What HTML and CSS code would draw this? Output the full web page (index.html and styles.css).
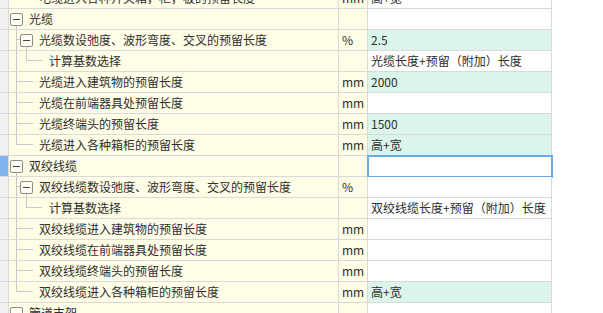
FILE: index.html
```html
<!DOCTYPE html>
<html lang="zh">
<head>
<meta charset="utf-8">
<link rel="stylesheet" href="styles.css">
</head>
<body>
<div class="grid">
  <div class="row">
    <div class="gut"></div>
    <div class="name"><span class="g-l"></span><span class="h13"></span><span class="txt">电缆进入各种开关箱，柜，板的预留长度</span></div>
    <div class="unit">mm</div>
    <div class="val">高+宽</div>
  </div>
  <div class="row">
    <div class="gut"></div>
    <div class="name"><span class="node"><span class="box"><span class="minus"></span></span></span><span class="txt">光缆</span></div>
    <div class="unit"></div>
    <div class="val"></div>
  </div>
  <div class="row">
    <div class="gut"></div>
    <div class="name"><span class="g-t"></span><span class="node"><span class="box"><span class="minus"></span></span></span><span class="txt">光缆数设弛度、波形弯度、交叉的预留长度</span></div>
    <div class="unit">%</div>
    <div class="val green">2.5</div>
  </div>
  <div class="row">
    <div class="gut"></div>
    <div class="name"><span class="g-v"></span><span class="g-l13"></span><span class="h9"></span><span class="txt txt3">计算基数选择</span></div>
    <div class="unit"></div>
    <div class="val">光缆长度+预留（附加）长度</div>
  </div>
  <div class="row">
    <div class="gut"></div>
    <div class="name"><span class="g-t"></span><span class="h13"></span><span class="txt">光缆进入建筑物的预留长度</span></div>
    <div class="unit">mm</div>
    <div class="val green">2000</div>
  </div>
  <div class="row">
    <div class="gut"></div>
    <div class="name"><span class="g-t"></span><span class="h13"></span><span class="txt">光缆在前端器具处预留长度</span></div>
    <div class="unit">mm</div>
    <div class="val"></div>
  </div>
  <div class="row">
    <div class="gut"></div>
    <div class="name"><span class="g-t"></span><span class="h13"></span><span class="txt">光缆终端头的预留长度</span></div>
    <div class="unit">mm</div>
    <div class="val green">1500</div>
  </div>
  <div class="row">
    <div class="gut"></div>
    <div class="name"><span class="g-l"></span><span class="h13"></span><span class="txt">光缆进入各种箱柜的预留长度</span></div>
    <div class="unit">mm</div>
    <div class="val green">高+宽</div>
  </div>
  <div class="row">
    <div class="gut selected"></div>
    <div class="name"><span class="node"><span class="box"><span class="minus"></span></span></span><span class="txt">双绞线缆</span></div>
    <div class="unit"></div>
    <div class="val focus"></div>
  </div>
  <div class="row">
    <div class="gut"></div>
    <div class="name"><span class="g-t"></span><span class="node"><span class="box"><span class="minus"></span></span></span><span class="txt">双绞线缆数设弛度、波形弯度、交叉的预留长度</span></div>
    <div class="unit">%</div>
    <div class="val"></div>
  </div>
  <div class="row">
    <div class="gut"></div>
    <div class="name"><span class="g-v"></span><span class="g-l13"></span><span class="h9"></span><span class="txt txt3">计算基数选择</span></div>
    <div class="unit"></div>
    <div class="val">双绞线缆长度+预留（附加）长度</div>
  </div>
  <div class="row">
    <div class="gut"></div>
    <div class="name"><span class="g-t"></span><span class="h13"></span><span class="txt">双绞线缆进入建筑物的预留长度</span></div>
    <div class="unit">mm</div>
    <div class="val"></div>
  </div>
  <div class="row">
    <div class="gut"></div>
    <div class="name"><span class="g-t"></span><span class="h13"></span><span class="txt">双绞线缆在前端器具处预留长度</span></div>
    <div class="unit">mm</div>
    <div class="val"></div>
  </div>
  <div class="row">
    <div class="gut"></div>
    <div class="name"><span class="g-t"></span><span class="h13"></span><span class="txt">双绞线缆终端头的预留长度</span></div>
    <div class="unit">mm</div>
    <div class="val"></div>
  </div>
  <div class="row">
    <div class="gut"></div>
    <div class="name"><span class="g-l"></span><span class="h13"></span><span class="txt">双绞线缆进入各种箱柜的预留长度</span></div>
    <div class="unit">mm</div>
    <div class="val green">高+宽</div>
  </div>
  <div class="row">
    <div class="gut"></div>
    <div class="name"><span class="node"><span class="box"><span class="minus"></span></span></span><span class="txt">管道支架</span></div>
    <div class="unit"></div>
    <div class="val"></div>
  </div>
</div>
</body>
</html>
```

FILE: styles.css
```css
html, body {
  margin: 0;
  padding: 0;
  background: #ffffff;
  overflow: hidden;
}
body {
  width: 603px;
  height: 313px;
  font-family: "Noto Sans CJK SC", "Noto Sans", sans-serif;
  font-size: 12px;
  color: #2e2e2e;
}
.grid {
  margin-top: -12px;
  display: flex;
  flex-direction: column;
  width: 552px;
}
.row {
  display: flex;
  height: 21px;
}
.row > div {
  box-sizing: border-box;
  height: 21px;
  border-bottom: 1px solid #d9d9d9;
  border-right: 1px solid #d9d9d9;
  line-height: 20px;
  white-space: nowrap;
  overflow: hidden;
}
.gut {
  width: 9px;
  background: #f0f0f0;
}
.gut.selected {
  background: #80b3ee;
}
.name {
  width: 330px;
  background: #fffde6;
  display: flex;
  align-items: stretch;
  padding-left: 1px;
}
.unit {
  width: 29px;
  background: #fffde6;
  padding-left: 3px;
}
.val {
  width: 184px;
  background: #ffffff;
  padding-left: 3px;
}
.val.green {
  background: #dcf5ea;
}
.val.focus {
  outline: 2px solid #6ea7e6;
  outline-offset: -1px;
}
.txt {
  margin-left: 6px;
}
.txt3 {
  margin-left: 7px;
}
/* tree guides */
.g-t, .g-l, .g-v {
  width: 10px;
  flex-shrink: 0;
}
.g-t {
  background:
    linear-gradient(#c9c9c9, #c9c9c9) 6px 0 / 1px 100% no-repeat,
    linear-gradient(#c9c9c9, #c9c9c9) 6px 9px / 4px 1px no-repeat;
}
.g-l {
  background:
    linear-gradient(#c9c9c9, #c9c9c9) 6px 0 / 1px 10px no-repeat,
    linear-gradient(#c9c9c9, #c9c9c9) 6px 9px / 4px 1px no-repeat;
}
.g-v {
  background: linear-gradient(#c9c9c9, #c9c9c9) 6px 0 / 1px 100% no-repeat;
}
.g-l13 {
  width: 13px;
  flex-shrink: 0;
  background:
    linear-gradient(#c9c9c9, #c9c9c9) 6px 0 / 1px 10px no-repeat,
    linear-gradient(#c9c9c9, #c9c9c9) 6px 9px / 7px 1px no-repeat;
}
.h13 {
  width: 13px;
  flex-shrink: 0;
  background: linear-gradient(#c9c9c9, #c9c9c9) 0 9px / 100% 1px no-repeat;
}
.h9 {
  width: 9px;
  flex-shrink: 0;
  background: linear-gradient(#c9c9c9, #c9c9c9) 0 9px / 100% 1px no-repeat;
}
.node {
  width: 13px;
  flex-shrink: 0;
  padding-top: 4px;
  box-sizing: border-box;
  background: linear-gradient(#c9c9c9, #c9c9c9) 6px 17px / 1px 3px no-repeat;
}
.box {
  box-sizing: border-box;
  width: 13px;
  height: 13px;
  border: 1px solid #8c8c8c;
  border-radius: 2px;
  background: #fffef6;
  display: flex;
  align-items: center;
  justify-content: center;
}
.minus {
  width: 7px;
  height: 1px;
  background: #444444;
}
```
